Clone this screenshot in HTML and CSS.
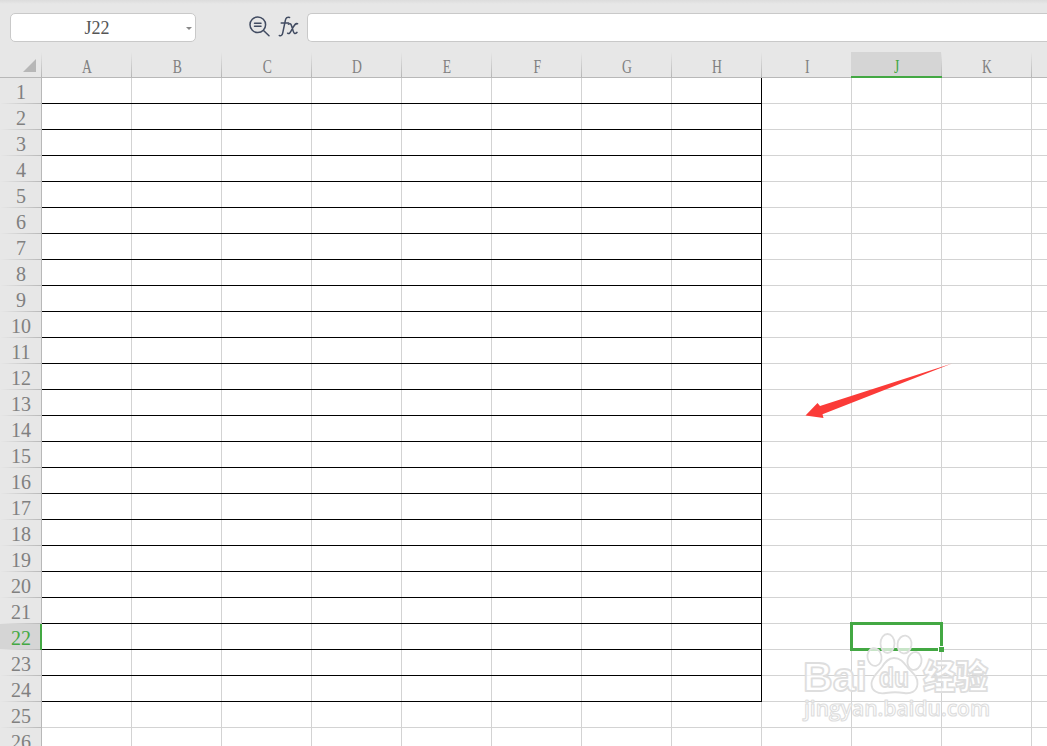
FILE: index.html
```
<!DOCTYPE html>
<html lang="zh-CN">
<head>
    <meta charset="UTF-8">
    <title>J22</title>
    <link rel="stylesheet" href="styles.css">
</head>
<body>
    <header class="formula-bar">
        <div class="name-box">
            <span class="name-text">J22</span>
            <span class="name-arrow"></span>
        </div>
        <div class="tools">
            <svg class="icon-zoom" width="24" height="24" viewBox="0 0 24 24">
                <circle cx="9.8" cy="9.8" r="7.8"/>
                <path d="M15.5 15.5L21 20.8M6.5 8.3H13M6.5 11.3H13"/>
            </svg>
            <svg class="icon-fx" width="22" height="24" viewBox="0 0 22 24">
                <path d="M11.6 2.4C9.2 1.8 7.9 2.9 7.4 5.2L4.8 17.6C4.3 20.2 3.2 21.2 1.3 20.5M3.2 8H10.6"/>
                <path d="M10.4 9.2C12.4 8 13 9 13.7 11.2L15.3 16.4C16 18.8 17.1 19.2 19 17.4M19.6 8.8C17.7 8 16.9 9.2 15.2 12.2L13.3 15.6C11.9 18.3 11 19.2 9.6 18.2"/>
            </svg>
        </div>
        <div class="formula-input"></div>
    </header>

    <main class="sheet">
        <div class="row head" id="head">
            <div class="corner"></div>
        </div>
        <div id="rows"></div>

        <div class="selection"><span class="handle"></span></div>

        <svg class="arrow" width="150" height="60" viewBox="800 360 150 60">
            <path d="M952 363.5L820 406L817.5 403L805.5 415.5L823.5 418L822.5 414.2Z"/>
        </svg>

        <svg class="watermark" width="200" height="96" viewBox="798 630 200 96">
            <g class="mark">
                <ellipse cx="887.5" cy="643.5" rx="7" ry="9.5"/>
                <ellipse cx="904.5" cy="644.5" rx="7" ry="9" transform="rotate(8 904.5 644.5)"/>
                <ellipse cx="874.5" cy="657" rx="7" ry="9" transform="rotate(-10 874.5 657)"/>
                <ellipse cx="914.5" cy="661" rx="7" ry="9" transform="rotate(12 914.5 661)"/>
                <path d="M894 658C901 658 904 663 908 668C913 673 918 677 917.5 684C917 692 910 694 904 693C898 692 892 692 886 693C878 694.5 871 691 871.5 683C872 677 878 672 882 667C885 662 888 658 894 658Z"/>
                <text class="bai" x="803" y="691" textLength="64" lengthAdjust="spacingAndGlyphs">Bai</text>
                <text class="du" x="879" y="687" textLength="30" lengthAdjust="spacingAndGlyphs">du</text>
                <text class="cjk" x="923" y="689" textLength="65" lengthAdjust="spacingAndGlyphs">经验</text>
                <text class="url" x="804" y="716" textLength="186" lengthAdjust="spacingAndGlyphs">jingyan.baidu.com</text>
            </g>
        </svg>
    </main>

    <script>
        const COLUMNS = 'ABCDEFGHIJKL';
        const ROWS = 26;

        // Column letters
        const head = document.getElementById('head');
        for (const letter of COLUMNS) {
            const cell = document.createElement('div');
            cell.className = 'col-head' + (letter === 'J' ? ' active' : '');
            cell.innerHTML = letter === 'L' ? '' : `<span>${letter}</span>`;
            head.appendChild(cell);
        }

        // Rows, A1:H24 carries the black borders
        const rows = document.getElementById('rows');
        for (let r = 1; r <= ROWS; r++) {
            const row = document.createElement('div');
            row.className = 'row';
            let html = `<div class="row-head${r === 22 ? ' active' : ''}"><span>${r}</span></div>`;
            for (let c = 0; c < COLUMNS.length; c++) {
                let name = 'cell';
                if (r <= 24 && c < 8) name += ' lined';
                if (r <= 24 && c === 7) name += ' last';
                html += `<div class="${name}"></div>`;
            }
            row.innerHTML = html;
            rows.appendChild(row);
        }
    </script>
</body>
</html>
```
FILE: styles.css
```
* {
    box-sizing: border-box;
}
body {
    margin: 0;
    width: 1047px;
    height: 746px;
    overflow: hidden;
    background: #e7e7e7;
    font-family: "Liberation Serif", "Noto Sans CJK SC", serif;
}
.formula-bar {
    display: flex;
    height: 52px;
    padding: 13px 0 0 10px;
    background: linear-gradient(#dcdcdc, #e7e7e7 4px);
}
.name-box {
    display: flex;
    align-items: center;
    width: 186px;
    height: 29px;
    padding: 1px 3px 0 0;
    background: #fff;
    border: 1px solid #c9c9c9;
    border-radius: 5px;
}
.name-text {
    flex: 1;
    padding-right: 3px;
    text-align: center;
    font-size: 18px;
    line-height: 27px;
    color: #555;
}
.name-arrow {
    border: 3.5px solid transparent;
    border-top-color: #888;
    border-bottom: 0;
}
.tools {
    display: flex;
    gap: 6px;
    width: 111px;
    padding-left: 52px;
    margin-top: 2px;
}
.tools svg {
    flex: none;
    fill: none;
    stroke: #414b61;
    stroke-width: 1.5;
    stroke-linecap: round;
}
.formula-input {
    flex: 1;
    height: 29px;
    background: #fff;
    border: 1px solid #c9c9c9;
    border-right: 0;
    border-radius: 5px 0 0 5px;
}

.sheet {
    position: relative;
    height: 694px;
    overflow: hidden;
}
.row {
    display: grid;
    grid-template-columns: 42px repeat(12, 90px);
    grid-template-rows: 26px;
    height: 26px;
}

/* Headers: separator lines fade out towards the window edge */
.corner, .col-head {
    background: linear-gradient(#b8b8b8, #b8b8b8) bottom / 100% 1px no-repeat,
        linear-gradient(#e7e7e7, #b4b4b4) right / 1px 100% no-repeat;
}
.corner {
    display: flex;
    justify-content: flex-end;
    padding: 7px 6px 0 0;
}
.corner::after {
    content: "";
    width: 13px;
    height: 13px;
    background: #b7b7b7;
    clip-path: polygon(100% 0, 100% 100%, 0 100%);
}
.col-head {
    text-align: center;
    font-size: 19px;
    line-height: 29px;
    color: #808080;
}
.col-head span {
    display: inline-block;
    transform: scaleX(0.72);
}
.col-head.active {
    margin-left: -1px;
    color: #43a843;
    background-color: #d5d5d5;
    box-shadow: inset 0 -2px #43a843;
    background-size: 0 0, 1px 100%;
}
.row-head {
    text-align: center;
    font-size: 20px;
    line-height: 29px;
    color: #808080;
    background: linear-gradient(#b8b8b8, #b8b8b8) right / 1px 100% no-repeat,
        linear-gradient(90deg, #e7e7e7, #b8b8b8) bottom / 100% 1px no-repeat;
}
.row-head.active {
    padding-left: 2px;
    color: #43a843;
    background-color: #d5d5d5;
    background-size: 0 0, 100% 1px;
    border-right: 2px solid #43a843;
}

.cell {
    background: #fff;
    box-shadow: inset -1px 0 #d3d3d3, inset 0 -1px #d3d3d3;
}
.cell.lined {
    box-shadow: inset 0 -1px #000, inset -1px 0 #d3d3d3;
}
.cell.last {
    box-shadow: inset -1px -1px #000;
}

.selection {
    position: absolute;
    left: 850px;
    top: 570px;
    width: 93px;
    height: 29px;
    border: 3px solid #43a843;
}
.handle {
    position: absolute;
    right: -4px;
    bottom: -4px;
    width: 6px;
    height: 6px;
    background: #43a843;
    border: solid #fff;
    border-width: 1px 0 0 1px;
}
.arrow {
    position: absolute;
    left: 800px;
    top: 308px;
    overflow: visible;
    fill: #fb3b38;
}
.watermark {
    position: absolute;
    left: 798px;
    top: 578px;
}
.mark {
    fill: rgba(255, 255, 255, 0.7);
    stroke: #dedede;
    stroke-width: 1.8;
    stroke-linejoin: round;
    font-family: "Liberation Sans", "Noto Sans CJK SC", sans-serif;
}
.bai {
    font-size: 41px;
    font-weight: bold;
}
.du {
    font-size: 27px;
    font-weight: bold;
}
.cjk {
    font-family: "Noto Sans CJK SC", sans-serif;
    font-size: 34px;
    font-weight: 900;
}
.url {
    font-family: "Open Sans", sans-serif;
    font-size: 22px;
    font-weight: 600;
    stroke-width: 1.2;
}
```
